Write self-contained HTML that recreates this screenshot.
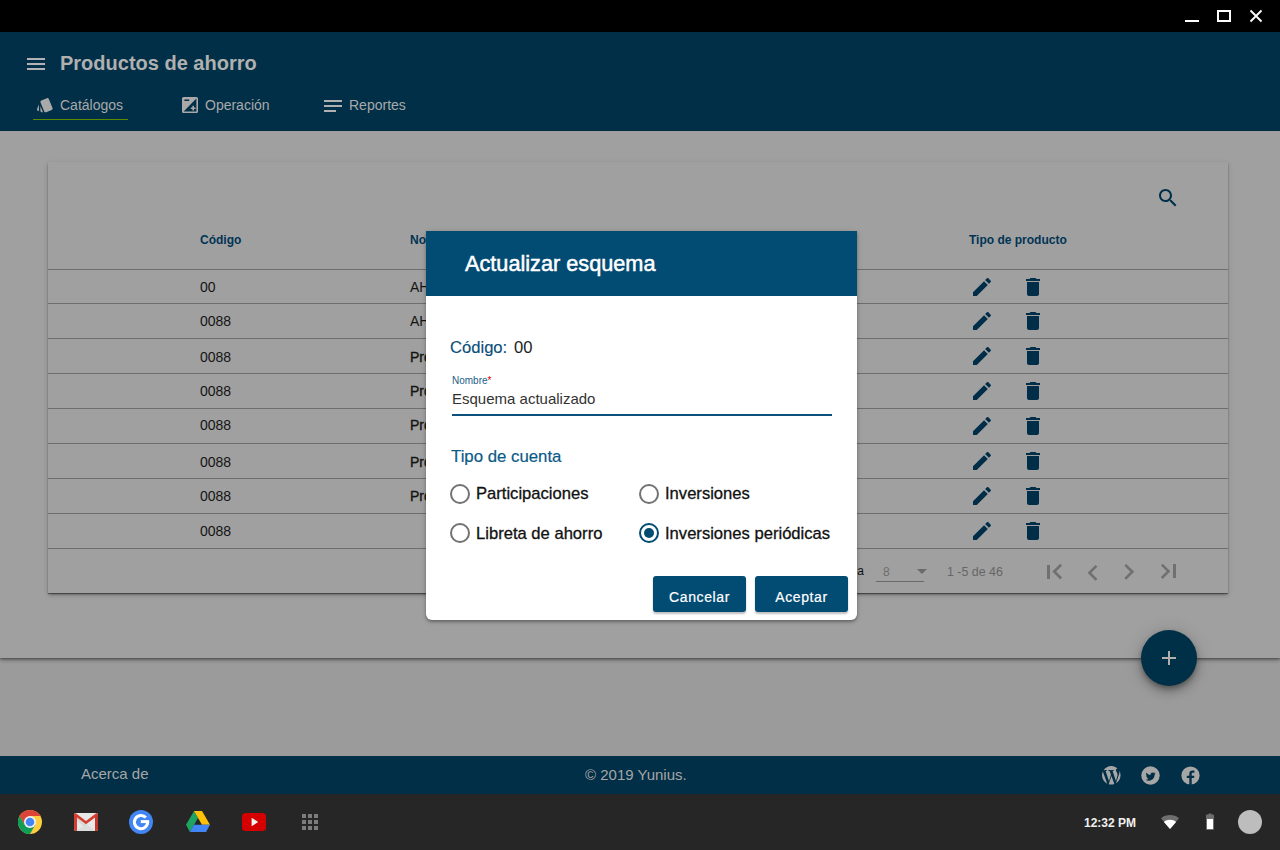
<!DOCTYPE html>
<html>
<head>
<meta charset="utf-8">
<style>
*{margin:0;padding:0;box-sizing:border-box}
html,body{width:1280px;height:850px;overflow:hidden;background:#9b9b9b;font-family:"Liberation Sans",sans-serif}
.a{position:absolute}
.t{position:absolute;white-space:nowrap;line-height:1}
svg{position:absolute;display:block}
#titlebar{left:0;top:0;width:1280px;height:32px;background:#000}
#appbar{left:0;top:32px;width:1280px;height:99px;background:#002f47}
#content{left:0;top:131px;width:1280px;height:527px;background:#a0a0a0;box-shadow:0 2px 4px rgba(0,0,0,.35),0 1px 2px rgba(0,0,0,.3)}
#card{left:48px;top:162px;width:1180px;height:431px;background:#a0a0a0;box-shadow:0 1px 1px 0 rgba(0,0,0,.4),0 3px 3px -2px rgba(0,0,0,.25),0 2px 5px 0 rgba(0,0,0,.2)}
.hl{position:absolute;left:48px;width:1180px;height:1px;background:#6e6e6e}
.th{font-size:12px;font-weight:700;color:#003455}
.td{font-size:14px;color:#141414}
#footer{left:0;top:756px;width:1280px;height:38px;background:#002f47}
#shelf{left:0;top:794px;width:1280px;height:56px;background:#262626}
#dialog{left:426px;top:231px;width:431px;height:389px;background:#fff;border-radius:0 0 6px 6px;box-shadow:0 2px 3px rgba(0,0,0,.3),0 1px 6px rgba(0,0,0,.12)}
#dlghead{left:426px;top:231px;width:431px;height:65px;background:#024b73}
.radio{position:absolute;width:20px;height:20px;border-radius:50%;border:2px solid #727272}
.radio.on{border-color:#024b73}
.radio.on::after{content:"";position:absolute;left:3px;top:3px;width:10px;height:10px;border-radius:50%;background:#024b73}
.btn{position:absolute;top:576px;width:93px;height:36px;background:#024b73;border-radius:3px;box-shadow:0 2px 2px rgba(0,0,0,.25)}
.bt{top:590px;width:93px;text-align:center;font-size:14px;color:#fff;letter-spacing:.6px;-webkit-text-stroke:.2px #fff}
.rl{font-size:16.6px;color:#111;-webkit-text-stroke:.3px #111}
</style>
</head>
<body>
<!-- title bar -->
<div id="titlebar" class="a"></div>
<!-- window controls -->
<div class="a" style="left:1185px;top:20px;width:14px;height:2px;background:#fff"></div>
<div class="a" style="left:1217px;top:10px;width:14px;height:12px;border:2px solid #fff"></div>
<svg style="left:1249px;top:9px" width="14" height="14" viewBox="0 0 14 14"><path d="M1.5 1.5L12.5 12.5M12.5 1.5L1.5 12.5" stroke="#fff" stroke-width="1.8"/></svg>

<!-- app bar -->
<div id="appbar" class="a"></div>
<div class="a" style="left:27px;top:58px;width:18px;height:2px;background:#b3b3b3"></div>
<div class="a" style="left:27px;top:63px;width:18px;height:2px;background:#b3b3b3"></div>
<div class="a" style="left:27px;top:68px;width:18px;height:2px;background:#b3b3b3"></div>
<div class="t" style="left:60px;top:53px;font-size:20px;font-weight:700;color:#b0b0b0">Productos de ahorro</div>

<!-- tabs -->
<svg style="left:36px;top:96px" width="18" height="18" viewBox="0 0 24 24"><path fill="#a9a9a9" d="M2.53 19.65l1.34.56v-9.03l-2.43 5.86c-.41 1.02.08 2.19 1.09 2.61zm19.5-3.7L17.07 3.98c-.31-.75-1.04-1.21-1.81-1.23-.26 0-.53.04-.79.15L7.1 5.95c-.75.31-1.21 1.03-1.23 1.8-.01.27.04.54.15.8l4.96 11.97c.31.76 1.05 1.22 1.83 1.23.26 0 .52-.05.77-.15l7.36-3.05c1.02-.42 1.51-1.59 1.09-2.6zM5.88 19.75c0 1.1.9 2 2 2h1.45l-3.45-8.34v6.34z"/></svg>
<div class="t" style="left:60px;top:98px;font-size:14px;color:#a9a9a9">Catálogos</div>
<div class="a" style="left:33px;top:119px;width:95px;height:1px;background:#5a8a00"></div>

<svg style="left:182px;top:97px" width="16" height="16" viewBox="2 2 20 20"><path fill="#a9a9a9" d="M15 17v2h2v-2h2v-2h-2v-2h-2v2h-2v2h2zm5-15H4c-1.1 0-2 .9-2 2v16c0 1.1.9 2 2 2h16c1.1 0 2-.9 2-2V4c0-1.1-.9-2-2-2zM5 5h6v2H5V5zm15 15H4L20 4v16z"/></svg>
<div class="t" style="left:205px;top:98px;font-size:14px;color:#a9a9a9">Operación</div>

<div class="a" style="left:324px;top:100px;width:18px;height:2px;background:#b0b0b0"></div>
<div class="a" style="left:324px;top:105px;width:18px;height:2px;background:#b0b0b0"></div>
<div class="a" style="left:324px;top:110px;width:12px;height:2px;background:#b0b0b0"></div>
<div class="t" style="left:349px;top:98px;font-size:14px;color:#a9a9a9">Reportes</div>

<!-- content -->
<div id="content" class="a"></div>
<div id="card" class="a"></div>

<!-- TABLE -->
<div class="t th" style="left:200px;top:233.8px">Código</div>
<div class="t th" style="left:410px;top:233.8px">Nombre</div>
<div class="t th" style="left:969px;top:233.8px">Tipo de producto</div>
<svg style="left:1156px;top:186px" width="24" height="24" viewBox="0 0 24 24"><path fill="#002f4a" d="M15.5 14h-.79l-.28-.27C15.41 12.59 16 11.11 16 9.5 16 5.91 13.09 3 9.5 3S3 5.91 3 9.5 5.91 16 9.5 16c1.61 0 3.09-.59 4.23-1.57l.27.28v.79l5 4.99L20.49 19l-4.99-5zm-6 0C7.01 14 5 11.99 5 9.5S7.01 5 9.5 5 14 7.01 14 9.5 11.99 14 9.5 14z"/></svg>
<div class="hl" style="top:269px"></div>
<div class="hl" style="top:303px"></div>
<div class="hl" style="top:338px"></div>
<div class="hl" style="top:373px"></div>
<div class="hl" style="top:408px"></div>
<div class="hl" style="top:443px"></div>
<div class="hl" style="top:478px"></div>
<div class="hl" style="top:513px"></div>
<div class="hl" style="top:548px"></div>
<div class="t td" style="left:200px;top:280.15px">00</div>
<div class="t td" style="left:410px;top:280.15px">AHORRO</div>
<svg style="left:970px;top:275px" width="24" height="24" viewBox="0 0 24 24"><path fill="#002d48" d="M3 17.25V21h3.75L17.81 9.94l-3.75-3.75L3 17.25zM20.71 7.04c.39-.39.39-1.02 0-1.41l-2.34-2.34c-.39-.39-1.02-.39-1.41 0l-1.83 1.83 3.75 3.75 1.83-1.83z"/></svg>
<svg style="left:1021px;top:275px" width="24" height="24" viewBox="0 0 24 24"><path fill="#002d48" d="M6 19c0 1.1.9 2 2 2h8c1.1 0 2-.9 2-2V7H6v12zM19 4h-3.5l-1-1h-5l-1 1H5v2h14V4z"/></svg>
<div class="t td" style="left:200px;top:314.15px">0088</div>
<div class="t td" style="left:410px;top:314.15px">AHORRO</div>
<svg style="left:970px;top:309px" width="24" height="24" viewBox="0 0 24 24"><path fill="#002d48" d="M3 17.25V21h3.75L17.81 9.94l-3.75-3.75L3 17.25zM20.71 7.04c.39-.39.39-1.02 0-1.41l-2.34-2.34c-.39-.39-1.02-.39-1.41 0l-1.83 1.83 3.75 3.75 1.83-1.83z"/></svg>
<svg style="left:1021px;top:309px" width="24" height="24" viewBox="0 0 24 24"><path fill="#002d48" d="M6 19c0 1.1.9 2 2 2h8c1.1 0 2-.9 2-2V7H6v12zM19 4h-3.5l-1-1h-5l-1 1H5v2h14V4z"/></svg>
<div class="t td" style="left:200px;top:350.15px">0088</div>
<div class="t td" style="left:410px;top:350.15px;-webkit-text-stroke:.35px #141414">Producto</div>
<svg style="left:970px;top:344px" width="24" height="24" viewBox="0 0 24 24"><path fill="#002d48" d="M3 17.25V21h3.75L17.81 9.94l-3.75-3.75L3 17.25zM20.71 7.04c.39-.39.39-1.02 0-1.41l-2.34-2.34c-.39-.39-1.02-.39-1.41 0l-1.83 1.83 3.75 3.75 1.83-1.83z"/></svg>
<svg style="left:1021px;top:344px" width="24" height="24" viewBox="0 0 24 24"><path fill="#002d48" d="M6 19c0 1.1.9 2 2 2h8c1.1 0 2-.9 2-2V7H6v12zM19 4h-3.5l-1-1h-5l-1 1H5v2h14V4z"/></svg>
<div class="t td" style="left:200px;top:384.15px">0088</div>
<div class="t td" style="left:410px;top:384.15px;-webkit-text-stroke:.35px #141414">Producto</div>
<svg style="left:970px;top:379px" width="24" height="24" viewBox="0 0 24 24"><path fill="#002d48" d="M3 17.25V21h3.75L17.81 9.94l-3.75-3.75L3 17.25zM20.71 7.04c.39-.39.39-1.02 0-1.41l-2.34-2.34c-.39-.39-1.02-.39-1.41 0l-1.83 1.83 3.75 3.75 1.83-1.83z"/></svg>
<svg style="left:1021px;top:379px" width="24" height="24" viewBox="0 0 24 24"><path fill="#002d48" d="M6 19c0 1.1.9 2 2 2h8c1.1 0 2-.9 2-2V7H6v12zM19 4h-3.5l-1-1h-5l-1 1H5v2h14V4z"/></svg>
<div class="t td" style="left:200px;top:418.15px">0088</div>
<div class="t td" style="left:410px;top:418.15px;-webkit-text-stroke:.35px #141414">Producto</div>
<svg style="left:970px;top:414px" width="24" height="24" viewBox="0 0 24 24"><path fill="#002d48" d="M3 17.25V21h3.75L17.81 9.94l-3.75-3.75L3 17.25zM20.71 7.04c.39-.39.39-1.02 0-1.41l-2.34-2.34c-.39-.39-1.02-.39-1.41 0l-1.83 1.83 3.75 3.75 1.83-1.83z"/></svg>
<svg style="left:1021px;top:414px" width="24" height="24" viewBox="0 0 24 24"><path fill="#002d48" d="M6 19c0 1.1.9 2 2 2h8c1.1 0 2-.9 2-2V7H6v12zM19 4h-3.5l-1-1h-5l-1 1H5v2h14V4z"/></svg>
<div class="t td" style="left:200px;top:455.15px">0088</div>
<div class="t td" style="left:410px;top:455.15px;-webkit-text-stroke:.35px #141414">Producto</div>
<svg style="left:970px;top:449px" width="24" height="24" viewBox="0 0 24 24"><path fill="#002d48" d="M3 17.25V21h3.75L17.81 9.94l-3.75-3.75L3 17.25zM20.71 7.04c.39-.39.39-1.02 0-1.41l-2.34-2.34c-.39-.39-1.02-.39-1.41 0l-1.83 1.83 3.75 3.75 1.83-1.83z"/></svg>
<svg style="left:1021px;top:449px" width="24" height="24" viewBox="0 0 24 24"><path fill="#002d48" d="M6 19c0 1.1.9 2 2 2h8c1.1 0 2-.9 2-2V7H6v12zM19 4h-3.5l-1-1h-5l-1 1H5v2h14V4z"/></svg>
<div class="t td" style="left:200px;top:489.15px">0088</div>
<div class="t td" style="left:410px;top:489.15px;-webkit-text-stroke:.35px #141414">Producto</div>
<svg style="left:970px;top:484px" width="24" height="24" viewBox="0 0 24 24"><path fill="#002d48" d="M3 17.25V21h3.75L17.81 9.94l-3.75-3.75L3 17.25zM20.71 7.04c.39-.39.39-1.02 0-1.41l-2.34-2.34c-.39-.39-1.02-.39-1.41 0l-1.83 1.83 3.75 3.75 1.83-1.83z"/></svg>
<svg style="left:1021px;top:484px" width="24" height="24" viewBox="0 0 24 24"><path fill="#002d48" d="M6 19c0 1.1.9 2 2 2h8c1.1 0 2-.9 2-2V7H6v12zM19 4h-3.5l-1-1h-5l-1 1H5v2h14V4z"/></svg>
<div class="t td" style="left:200px;top:524.15px">0088</div>
<svg style="left:970px;top:519px" width="24" height="24" viewBox="0 0 24 24"><path fill="#002d48" d="M3 17.25V21h3.75L17.81 9.94l-3.75-3.75L3 17.25zM20.71 7.04c.39-.39.39-1.02 0-1.41l-2.34-2.34c-.39-.39-1.02-.39-1.41 0l-1.83 1.83 3.75 3.75 1.83-1.83z"/></svg>
<svg style="left:1021px;top:519px" width="24" height="24" viewBox="0 0 24 24"><path fill="#002d48" d="M6 19c0 1.1.9 2 2 2h8c1.1 0 2-.9 2-2V7H6v12zM19 4h-3.5l-1-1h-5l-1 1H5v2h14V4z"/></svg>
<div class="t" style="left:760px;top:565px;font-size:12px;color:#111;width:104px;text-align:right">Items por página</div>
<div class="t" style="left:883px;top:565.5px;font-size:12px;color:#6e6e6e">8</div>
<div class="a" style="left:876px;top:581px;width:48px;height:1px;background:#6a6a6a"></div>
<svg style="left:917px;top:569px" width="10" height="5" viewBox="0 0 10 5"><path fill="#6a6a6a" d="M0 0h10L5 5z"/></svg>
<div class="t" style="left:947px;top:566px;font-size:12.4px;color:#666">1 -5 de 46</div>
<div class="a" style="left:1047px;top:565px;width:3px;height:14px;background:#707070"></div>
<svg style="left:1041.5px;top:556.3px" width="31.2" height="31.2" viewBox="0 0 24 24"><path fill="#707070" d="M15.41 7.41L14 6l-6 6 6 6 1.41-1.41L10.83 12z"/></svg>
<svg style="left:1077.4px;top:557px" width="31.7" height="31.7" viewBox="0 0 24 24"><path fill="#707070" d="M15.41 7.41L14 6l-6 6 6 6 1.41-1.41L10.83 12z"/></svg>
<svg style="left:1113.4px;top:556.1px" width="31.7" height="31.7" viewBox="0 0 24 24"><path fill="#707070" d="M10 6L8.59 7.41 13.17 12l-4.58 4.59L10 18l6-6z"/></svg>
<svg style="left:1150.3px;top:556.3px" width="30.5" height="30.5" viewBox="0 0 24 24"><path fill="#707070" d="M10 6L8.59 7.41 13.17 12l-4.58 4.59L10 18l6-6z"/></svg>
<div class="a" style="left:1173px;top:564px;width:3px;height:14px;background:#707070"></div>

<!-- FAB -->
<div class="a" style="left:1141px;top:630px;width:56px;height:56px;border-radius:50%;background:#002f48;box-shadow:0 3px 5px -1px rgba(0,0,0,.3),0 6px 10px 0 rgba(0,0,0,.22),0 1px 18px 0 rgba(0,0,0,.15)"></div>
<div class="a" style="left:1162px;top:657px;width:14px;height:1.5px;background:#b2afac"></div>
<div class="a" style="left:1168.25px;top:651px;width:1.5px;height:14px;background:#b2afac"></div>

<!-- footer -->
<div id="footer" class="a"></div>
<div class="t" style="left:81px;top:766.3px;font-size:15px;color:#a6a6a6">Acerca de</div>
<div class="t" style="left:585px;top:767px;font-size:15px;color:#a6a6a6">© 2019 Yunius.</div>
<svg style="left:1100.8px;top:764.8px" width="20.6" height="20.6" viewBox="0 0 24 24"><path fill="#a6a6a6" d="M21.469 6.825c.84 1.537 1.318 3.3 1.318 5.175 0 3.979-2.156 7.456-5.363 9.325l3.295-9.527c.615-1.54.82-2.771.82-3.864 0-.405-.026-.78-.07-1.11m-7.981.105c.647-.03 1.232-.105 1.232-.105.582-.075.514-.93-.067-.899 0 0-1.755.135-2.88.135-1.064 0-2.85-.15-2.85-.15-.585-.03-.661.855-.075.885 0 0 .54.061 1.125.09l1.68 4.605-2.370 7.080L5.354 6.9c.649-.03 1.234-.1 1.234-.1.585-.075.516-.93-.065-.896 0 0-1.746.138-2.874.138-.2 0-.438-.008-.69-.015C4.911 3.150 8.235 1.215 12 1.215c2.809 0 5.365 1.072 7.286 2.833-.046-.003-.091-.009-.141-.009-1.06 0-1.812.923-1.812 1.914 0 .89.513 1.643 1.060 2.531.411.72.89 1.643.89 2.977 0 .915-.354 1.994-.821 3.479l-1.075 3.585-3.9-11.61.001.014zM12 22.784c-1.059 0-2.081-.153-3.048-.437l3.237-9.406 3.315 9.087c.024.053.05.101.078.149-1.12.393-2.325.609-3.582.609M1.211 12c0-1.564.336-3.050.935-4.390L7.290 21.709C3.694 19.960 1.212 16.271 1.211 12"/></svg>
<svg style="left:1140.6px;top:765.6px" width="19" height="19" viewBox="0 0 19 19"><circle cx="9.5" cy="9.5" r="9.2" fill="#a6a6a6"/><g transform="translate(4.6 5.5) scale(.42)"><path fill="#002f47" d="M23.953 4.57a10 10 0 01-2.825.775 4.958 4.958 0 002.163-2.723c-.951.555-2.005.959-3.127 1.184a4.92 4.92 0 00-8.384 4.482C7.69 8.095 4.067 6.13 1.64 3.162a4.822 4.822 0 00-.666 2.475c0 1.71.87 3.213 2.188 4.096a4.904 4.904 0 01-2.228-.616v.06a4.923 4.923 0 003.946 4.827 4.996 4.996 0 01-2.212.085 4.936 4.936 0 004.604 3.417 9.867 9.867 0 01-6.102 2.105c-.39 0-.779-.023-1.17-.067a13.995 13.995 0 007.557 2.209c9.053 0 13.998-7.496 13.998-13.985 0-.21 0-.42-.015-.63A9.935 9.935 0 0024 4.59z"/></g></svg>
<svg style="left:1180.5px;top:765.5px" width="19" height="19" viewBox="0 0 19 19"><circle cx="9.5" cy="9.5" r="9.1" fill="#a6a6a6"/><path fill="#002f47" d="M8.3 19V12.1H5.8V9.8h2.5V7.6c0-2.2 1.3-3.2 3.1-3.2.9 0 1.7.1 2 .1v2.2h-1.3c-1 0-1.4.5-1.4 1.3v1.8h2.7l-.3 2.3h-2.4V19z"/></svg>

<!-- shelf -->
<div id="shelf" class="a"></div>
<svg style="left:18px;top:810px" width="24" height="24" viewBox="0 0 24 24"><circle cx="12" cy="12" r="12" fill="#ffcd40"/><path fill="#db4437" d="M1.6 6A12 12 0 0 1 22.39 6H12L12 12 6.8 15z"/><path fill="#0f9d58" d="M1.6 6L6.8 15 12 12 17.2 15 12 24A12 12 0 0 1 1.6 6z"/><circle cx="12" cy="12" r="6" fill="#f1f1f1"/><circle cx="12" cy="12" r="4.3" fill="#4285f4"/></svg>
<svg style="left:74px;top:813px" width="24" height="18" viewBox="0 0 24 18"><defs><clipPath id="gmc"><rect width="24" height="18" rx="2"/></clipPath></defs><g clip-path="url(#gmc)"><rect width="24" height="18" fill="#e8e8e8"/><path fill="#dcdcdc" d="M3 18L12 10.5 21 18z"/><path fill="#c9c9c9" d="M3 4.5L12 11.3 9.5 13.2 3 8z" opacity=".5"/><path fill="#d23f31" d="M0 0H1.5L12 8 22.5 0H24V18H21V4.5L12 11.3 3 4.5V18H0z"/><path fill="#b63125" d="M21 4.5V18H24V1z" opacity=".5"/></g></svg>
<svg style="left:129px;top:810px" width="24" height="24" viewBox="0 0 24 24"><circle cx="12" cy="12" r="12" fill="#4285f4"/><path d="M16.9 7.58A6.6 6.6 0 1 0 18.6 11.6" fill="none" stroke="#fff" stroke-width="3"/><rect x="11.8" y="10.1" width="8.3" height="3" fill="#fff"/></svg>
<svg style="left:186px;top:810.5px" width="24" height="22" viewBox="0 0 24 22"><path fill="#1ea362" d="M8 0L0 13.8l3.9 7.2L12 7z"/><path fill="#ffc107" d="M8 0h8l8 13.8h-8z"/><path fill="#4285f4" d="M3.9 21h16.2L24 13.8H7.9z"/></svg>
<svg style="left:242px;top:813px" width="24" height="18" viewBox="0 0 24 18"><rect width="24" height="18" rx="3.5" fill="#d50000"/><path fill="#f2f2f2" d="M9.6 4.8v8.4l6.6-4.2z"/></svg>
<div class="a" style="left:302px;top:814px;width:4px;height:4px;background:#7c7c7c"></div>
<div class="a" style="left:308px;top:814px;width:4px;height:4px;background:#7c7c7c"></div>
<div class="a" style="left:314px;top:814px;width:4px;height:4px;background:#7c7c7c"></div>
<div class="a" style="left:302px;top:820px;width:4px;height:4px;background:#7c7c7c"></div>
<div class="a" style="left:308px;top:820px;width:4px;height:4px;background:#7c7c7c"></div>
<div class="a" style="left:314px;top:820px;width:4px;height:4px;background:#7c7c7c"></div>
<div class="a" style="left:302px;top:826px;width:4px;height:4px;background:#7c7c7c"></div>
<div class="a" style="left:308px;top:826px;width:4px;height:4px;background:#7c7c7c"></div>
<div class="a" style="left:314px;top:826px;width:4px;height:4px;background:#7c7c7c"></div>
<div class="t" style="left:1084px;top:816.8px;font-size:12px;font-weight:700;color:#f0f0f0">12:32 PM</div>
<svg style="left:1161px;top:815px" width="18" height="14" viewBox="0 0 18 14"><path fill="#6e6e6e" d="M9 0C5.6 0 2.4 1.2 0 3.2L9 14l9-10.8C15.6 1.2 12.4 0 9 0z"/><path fill="#fff" d="M2.9 6.9L9 14l6.1-7.1C13.6 5.5 11.4 4.7 9 4.7s-4.6.8-6.1 2.2z"/></svg>
<svg style="left:1205px;top:812px" width="10" height="19" viewBox="0 0 10 19"><path fill="#6e6e6e" d="M3.5 1.5h3v1H8a1 1 0 0 1 1 1V17a1 1 0 0 1-1 1H2a1 1 0 0 1-1-1V3.5a1 1 0 0 1 1-1h1.5z"/><rect x="2" y="7" width="6" height="10" fill="#fff"/></svg>
<div class="a" style="left:1238px;top:810px;width:24px;height:24px;border-radius:50%;background:#bdbdbd"></div>


<!-- DIALOG -->
<div id="dialog" class="a"></div>
<div id="dlghead" class="a"></div>
<div class="t" style="left:465px;top:253.4px;font-size:21.7px;color:#fff;-webkit-text-stroke:.5px #fff">Actualizar esquema</div>
<div class="t" style="left:450px;top:339.75px;font-size:16.6px;color:#0b4f7a;-webkit-text-stroke:.15px #0b4f7a">Código:</div>
<div class="t" style="left:514px;top:339.75px;font-size:16.6px;color:#222">00</div>
<div class="t" style="left:452px;top:376.4px;font-size:10px;color:#1b5e89">Nombre<span style="color:#d00">*</span></div>
<div class="t" style="left:452px;top:391.1px;font-size:15px;color:#333">Esquema actualizado</div>
<div class="a" style="left:452px;top:414px;width:380px;height:2px;background:#0b4f7a"></div>
<div class="t" style="left:451px;top:448.7px;font-size:16.8px;color:#0c5a87;-webkit-text-stroke:.2px #0c5a87">Tipo de cuenta</div>
<div class="radio" style="left:450px;top:484px"></div>
<div class="t rl" style="left:476px;top:485.9px">Participaciones</div>
<div class="radio" style="left:450px;top:523px"></div>
<div class="t rl" style="left:476px;top:525.9px">Libreta de ahorro</div>
<div class="radio" style="left:639px;top:484px"></div>
<div class="t rl" style="left:665px;top:485.9px">Inversiones</div>
<div class="radio on" style="left:639px;top:523px"></div>
<div class="t rl" style="left:665px;top:525.9px">Inversiones periódicas</div>
<div class="btn" style="left:653px"></div>
<div class="btn" style="left:755px"></div>
<div class="t bt" style="left:653px">Cancelar</div>
<div class="t bt" style="left:755px">Aceptar</div>


</body>
</html>
